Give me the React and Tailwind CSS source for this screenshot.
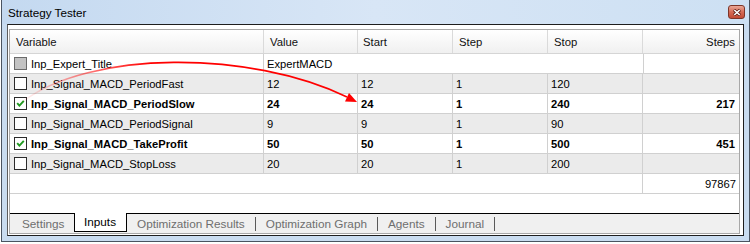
import React from "react";

const rows = [
  { name: "Inp_Signal_MACD_PeriodFast", v: "12", s: "12", st: "1", sp: "120", steps: "", checked: false, bold: false, gray: true },
  { name: "Inp_Signal_MACD_PeriodSlow", v: "24", s: "24", st: "1", sp: "240", steps: "217", checked: true, bold: true, gray: false },
  { name: "Inp_Signal_MACD_PeriodSignal", v: "9", s: "9", st: "1", sp: "90", steps: "", checked: false, bold: false, gray: true },
  { name: "Inp_Signal_MACD_TakeProfit", v: "50", s: "50", st: "1", sp: "500", steps: "451", checked: true, bold: true, gray: false },
  { name: "Inp_Signal_MACD_StopLoss", v: "20", s: "20", st: "1", sp: "200", steps: "", checked: false, bold: false, gray: true },
];

function Check({ checked, disabled }) {
  return (
    <span
      className={
        disabled
          ? "flex h-[13px] w-[13px] shrink-0 items-center justify-center border border-[#6a6a6a] bg-[#c3c3c3]"
          : "flex h-[13px] w-[13px] shrink-0 items-center justify-center border border-[#2c2c2c] bg-white"
      }
    >
      {checked && (
        <svg width="9" height="9" viewBox="0 0 9 9">
          <path d="M1.2 4.2 L3.4 6.6 L7.8 1.8" stroke="#1f9a1f" strokeWidth="1.9" fill="none" />
        </svg>
      )}
    </span>
  );
}

function Sep() {
  return <span className="h-[14px] w-[1px] shrink-0 bg-[#5a5a5a]" />;
}

export default function App() {
  return (
    <div className="relative h-[244px] w-[750px] bg-white font-['Liberation_Sans',Arial,sans-serif] text-black">
      <div className="ml-[1px] flex h-[242px] w-[749px] flex-col border-x border-b border-[#4a5461] bg-[#c9dcf0]">
        {/* title bar */}
        <div className="flex h-[24px] shrink-0 items-start justify-between bg-linear-to-r from-[#c4d9f0] via-[#d8e6f6] to-[#cde0f3]">
          <span className="pl-[6px] pt-[5px] text-[11.7px] leading-[16px] text-black">Strategy Tester</span>
          <div className="mr-[4px] mt-[5px] flex h-[14px] w-[17px] items-center justify-center rounded-[3px] border border-[#7d3528] bg-linear-to-b from-[#eaa898] via-[#d46a55] to-[#c24a34]">
            <svg width="8" height="7" viewBox="0 0 8 7">
              <path d="M1 0.8 L7 6.2 M7 0.8 L1 6.2" stroke="#5a1d14" strokeWidth="3" fill="none" />
              <path d="M1.3 1 L6.7 6 M6.7 1 L1.3 6" stroke="#ffffff" strokeWidth="1.6" fill="none" />
            </svg>
          </div>
        </div>

        {/* client */}
        <div className="mx-[5px] flex h-[212px] shrink-0 flex-col border border-[#1e1e1e] border-l-[#5c5c5c] bg-white pb-[1px] pl-[1px] pr-[3px] pt-[4px]">
          <div className="flex flex-1 flex-col border border-[#a8a8a8]">
            {/* table */}
            <div className="flex flex-1 flex-col bg-white text-[11.2px] leading-[14px]">
              <div className="grid h-[24px] grid-cols-[254px_94px_95px_95px_95px_96px] border-b border-[#d5d5d5] bg-linear-to-b from-white to-[#f0f0f0] text-[11.3px] text-[#111]">
                <div className="flex items-center border-r border-[#dadada] pl-[6px]">Variable</div>
                <div className="flex items-center border-r border-[#dadada] pl-[6px]">Value</div>
                <div className="flex items-center border-r border-[#dadada] pl-[5px]">Start</div>
                <div className="flex items-center border-r border-[#dadada] pl-[6px]">Step</div>
                <div className="flex items-center border-r border-[#dadada] pl-[6px]">Stop</div>
                <div className="flex items-center justify-end pr-[4px]">Steps</div>
              </div>

              <div className="grid h-[20px] grid-cols-[254px_380px_95px] border-b border-[#d0d0d0] bg-white">
                <div className="flex items-center border-r border-[#d0d0d0] pl-[4px]">
                  <Check disabled />
                  <span className="ml-[4px]">Inp_Expert_Title</span>
                </div>
                <div className="flex items-center border-r border-[#d0d0d0] pl-[3px]">ExpertMACD</div>
                <div />
              </div>

              {rows.map((r) => (
                <div
                  key={r.name}
                  className={
                    (r.gray ? "bg-[#ebebeb] " : "bg-white ") +
                    (r.bold ? "font-bold " : "") +
                    "grid h-[20px] grid-cols-[254px_94px_95px_95px_95px_96px] border-b border-[#d0d0d0]"
                  }
                >
                  <div className="flex items-center border-r border-[#d0d0d0] pl-[4px]">
                    <Check checked={r.checked} />
                    <span className="ml-[4px]">{r.name}</span>
                  </div>
                  <div className="flex items-center border-r border-[#d0d0d0] pl-[3px]">{r.v}</div>
                  <div className="flex items-center border-r border-[#d0d0d0] pl-[3px]">{r.s}</div>
                  <div className="flex items-center border-r border-[#d0d0d0] pl-[3px]">{r.st}</div>
                  <div className="flex items-center border-r border-[#d0d0d0] pl-[3px]">{r.sp}</div>
                  <div className="flex items-center justify-end pr-[4px]">{r.steps}</div>
                </div>
              ))}

              <div className="grid h-[20px] grid-cols-[633px_96px] border-b border-[#d0d0d0] bg-white">
                <div className="border-r border-[#d0d0d0]" />
                <div className="flex items-center justify-end pr-[3px]">97867</div>
              </div>
            </div>

            {/* tabs */}
            <div className="flex h-[20px] shrink-0 items-stretch bg-[#f0f0f0] text-[11.75px] leading-[16px]">
              <div className="flex w-[64px] items-center border-t border-black pl-[12px] text-[#6e6e6e]">Settings</div>
              <div className="flex h-[19px] w-[53px] items-center border-x border-b border-black bg-white pl-[9px] text-black">
                Inputs
              </div>
              <div className="flex flex-1 items-center border-t border-black text-[#6e6e6e]">
                <span className="px-[10px]">Optimization Results</span>
                <Sep />
                <span className="px-[10px]">Optimization Graph</span>
                <Sep />
                <span className="px-[10px]">Agents</span>
                <Sep />
                <span className="px-[10px]">Journal</span>
                <Sep />
              </div>
            </div>
          </div>
        </div>
      </div>

      {/* annotation arrow */}
      <svg className="pointer-events-none absolute left-0 top-0" width="750" height="244" viewBox="0 0 750 244">
        <defs>
          <linearGradient id="fade" gradientUnits="userSpaceOnUse" x1="24" y1="0" x2="150" y2="0">
            <stop offset="0" stopColor="#ff0000" stopOpacity="0.04" />
            <stop offset="1" stopColor="#ff0000" stopOpacity="1" />
          </linearGradient>
        </defs>
        <path d="M22 102 C 90 50, 250 50, 347 97" stroke="url(#fade)" strokeWidth="1.6" fill="none" />
        <polygon points="357,102 345,101.5 349,93" fill="#ff0000" />
      </svg>
    </div>
  );
}
